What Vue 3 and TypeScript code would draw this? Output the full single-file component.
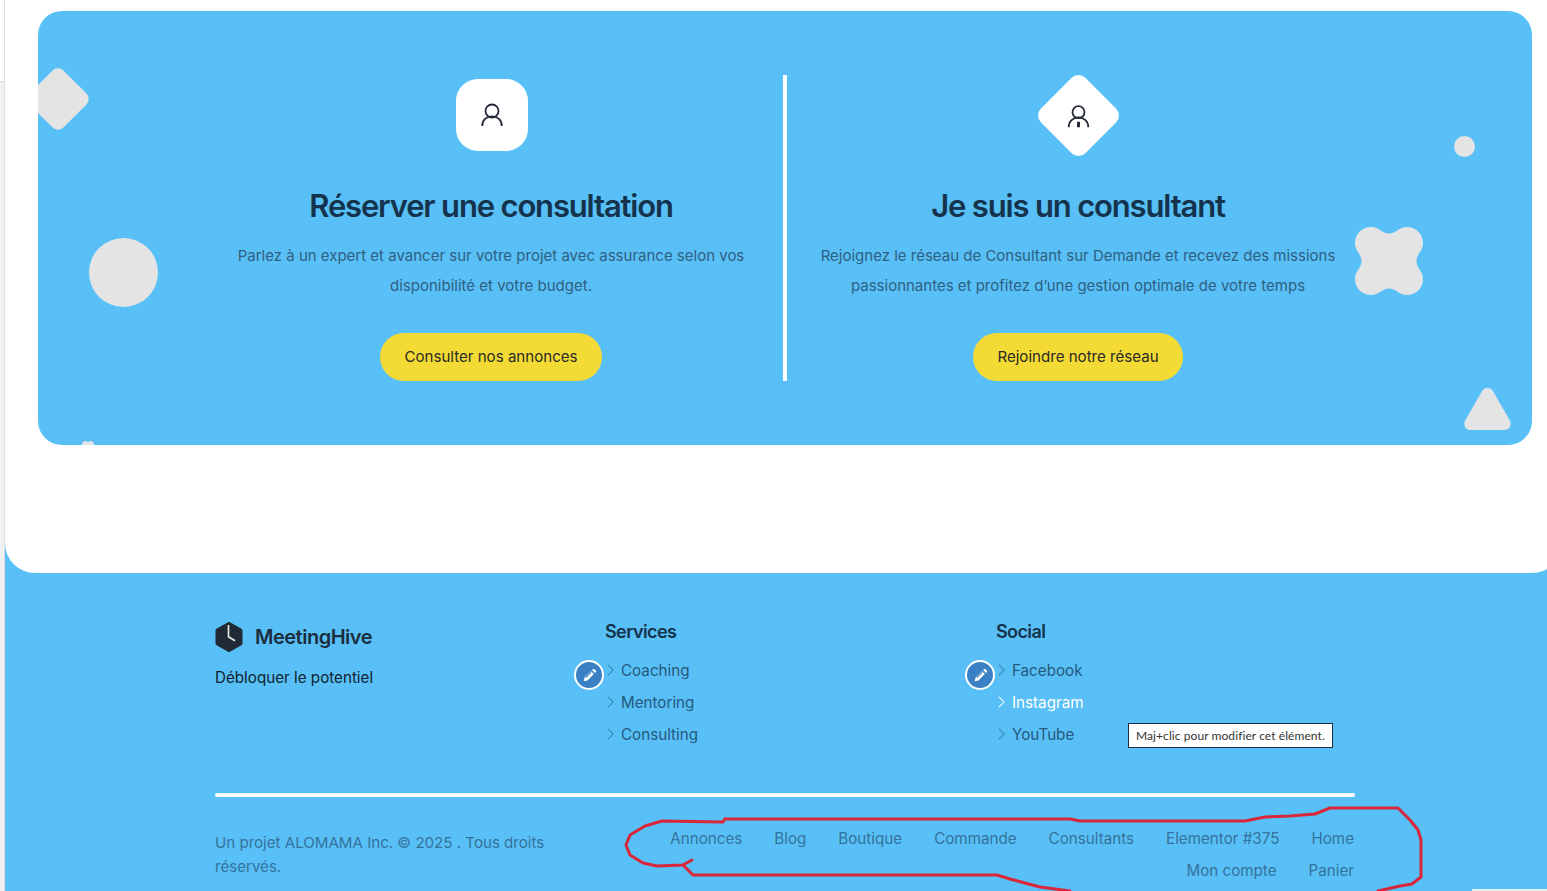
<script setup lang="ts">
interface Offer { title: string; lines: string[]; cta: string; diamond: boolean }
const offers: Offer[] = [
  { title: 'Réserver une consultation', lines: ['Parlez à un expert et avancer sur votre projet avec assurance selon vos', 'disponibilité et votre budget.'], cta: 'Consulter nos annonces', diamond: false },
  { title: 'Je suis un consultant', lines: ['Rejoignez le réseau de Consultant sur Demande et recevez des missions', 'passionnantes et profitez d’une gestion optimale de votre temps'], cta: 'Rejoindre notre réseau', diamond: true },
]
const services = ['Coaching', 'Mentoring', 'Consulting']
const social = ['Facebook', 'Instagram', 'YouTube']
const navTop = ['Annonces', 'Blog', 'Boutique', 'Commande', 'Consultants', 'Elementor #375', 'Home']
const navBottom = ['Mon compte', 'Panier']
</script>

<template>
  <div class="page">
    <aside class="rail"><div class="rail-top"></div></aside>
    <div class="content">
      <main class="panel">
        <section class="card">
          <div class="shape diamond"></div>
          <div class="shape circle-big"></div>
          <div class="shape circle-small"></div>
          <svg class="shape clover" viewBox="0 0 70 70"><path d="M17 1C25 1 28 7.5 35 7.5S45 1 53 1C62 1 69 8 69 17C69 25 62.5 28 62.5 35S69 45 69 53C69 62 62 69 53 69C45 69 42 62.5 35 62.5S25 69 17 69C8 69 1 62 1 53C1 45 7.5 42 7.5 35S1 25 1 17C1 8 8 1 17 1Z" /></svg>
          <svg class="shape triangle" viewBox="0 0 48 44"><path d="M24 2C27 2 29 4 30 6L46 34C48 39 45 43 41 43H7C3 43 0 39 2 34L18 6C19 4 21 2 24 2Z" /></svg>
          <svg class="shape clover-peek" viewBox="0 0 24 8"><path d="M0 8C0 3 3 0 7 0C9 0 10 2 12 2S15 0 17 0C21 0 24 3 24 8Z" /></svg>

          <article v-for="(o, i) in offers" :key="o.title" class="offer" :class="i === 0 ? 'first' : 'second'">
            <div class="badge" :class="{ 'badge-diamond': o.diamond }">
              <svg class="person" :class="{ upright: o.diamond }" viewBox="0 0 24 24" fill="none" stroke="#252b36" stroke-width="1.8">
                <circle cx="12" cy="8" :r="o.diamond ? 6 : 6.5" />
                <path d="M2.2 23C2.2 17 6.5 13.3 12 13.3S21.8 17 21.8 23" />
                <path v-if="o.diamond" d="M12 17.5v5.5" stroke-width="3" />
              </svg>
            </div>
            <h2>{{ o.title }}</h2>
            <p v-for="l in o.lines" :key="l">{{ l }}</p>
            <a class="cta">{{ o.cta }}</a>
          </article>
          <div class="divider"></div>
        </section>
      </main>

      <footer class="footer">
        <div class="cols">
          <div class="brand-col">
            <div class="brand">
              <svg class="logo" viewBox="0 0 28 30">
                <path d="M14 2 25.5 8.5V21.5L14 28 2.5 21.5V8.5Z" fill="#1f2a36" stroke="#1f2a36" stroke-width="4" stroke-linejoin="round" />
                <path d="M13.5 3v11.7l6.5 4" fill="none" stroke="#f1eee6" stroke-width="1.6" />
              </svg>
              <span>MeetingHive</span>
            </div>
            <div class="tagline">Débloquer le potentiel</div>
          </div>
          <div class="link-col">
            <h3>Services</h3>
            <span class="edit">
              <svg viewBox="0 0 16 16"><path d="M2.5 13.5l.9-3.6 6-6 2.7 2.7-6 6Z M10.4 2.9l.9-.9a1 1 0 0 1 1.4 0l1.3 1.3a1 1 0 0 1 0 1.4l-.9.9Z" fill="#fff" /><path d="M4.6 9.9l4.8-4.8" stroke="#3a80c4" stroke-width="1" /></svg>
            </span>
            <a v-for="s in services" :key="s" class="link">
              <svg class="chev" viewBox="0 0 8 14"><path d="M1 1l6 6-6 6" /></svg>{{ s }}
            </a>
          </div>
          <div class="link-col social">
            <h3>Social</h3>
            <span class="edit">
              <svg viewBox="0 0 16 16"><path d="M2.5 13.5l.9-3.6 6-6 2.7 2.7-6 6Z M10.4 2.9l.9-.9a1 1 0 0 1 1.4 0l1.3 1.3a1 1 0 0 1 0 1.4l-.9.9Z" fill="#fff" /><path d="M4.6 9.9l4.8-4.8" stroke="#3a80c4" stroke-width="1" /></svg>
            </span>
            <a v-for="s in social" :key="s" class="link" :class="{ active: s === 'Instagram' }">
              <svg class="chev" viewBox="0 0 8 14"><path d="M1 1l6 6-6 6" /></svg>{{ s }}
            </a>
            <div class="tooltip">Maj+clic pour modifier cet élément.</div>
          </div>
        </div>
        <div class="rule"></div>
        <div class="legal">
          <p class="copy">Un projet ALOMAMA Inc. © 2025 . Tous droits réservés.</p>
          <nav class="nav">
            <div class="nav-row"><a v-for="n in navTop" :key="n">{{ n }}</a></div>
            <div class="nav-row"><a v-for="n in navBottom" :key="n">{{ n }}</a></div>
          </nav>
        </div>
      </footer>
    </div>
    <svg class="scribble" viewBox="0 0 1547 891" fill="none" stroke="#d9263a" stroke-width="3" stroke-linejoin="round" stroke-linecap="round">
      <polyline points="725,819 723,822 662,821 645,826 630,835 626,845 630,855 643,863 657,866 683,865 692,860" />
      <polyline points="683,865 693,875 997,875 1010,879 1040,887 1070,891" />
      <polyline points="725,819 1070,819 1080,821 1245,821 1255,819 1265,817 1290,816 1315,814 1325,810 1330,808 1398,808 1410,820 1418,830 1421,840 1421,877 1412,884 1400,886 1378,891" />
    </svg>
    <div class="edge"></div>
  </div>
</template>

<style>
html, body { margin: 0; background: #58c0f6; overflow: hidden; }
</style>

<style scoped>
.page {
  position: relative;
  display: flex;
  width: 1547px;
  height: 891px;
  overflow: hidden;
  background: #58c0f6;
  font-family: "Inter", "Noto Sans", sans-serif;
}
.rail {
  flex: 0 0 4px;
  border-right: 1px solid #dedee1;
  background: #f0f0f3;
}
.rail-top { height: 81px; background: #fff; border-bottom: 1px solid #dcdcdf; }
.content { flex: 1; min-width: 0; }
.panel {
  height: 573px;
  box-sizing: border-box;
  margin-right: -15px;
  padding: 11px 30px 0 33px;
  background: #fff;
  border-radius: 0 0 30px 30px;
}
.card {
  position: relative;
  height: 434px;
  display: grid;
  grid-template-columns: 746px 748px;
  background: #58c0f6;
  border-radius: 24px;
  overflow: hidden;
}
.shape { position: absolute; fill: #e4e4e4; }
.diamond {
  left: -4px;
  top: 64px;
  width: 48px;
  height: 48px;
  background: #e4e4e4;
  border-radius: 8px;
  transform: rotate(45deg);
}
.circle-big { left: 51px; top: 227px; width: 69px; height: 69px; background: #e4e4e4; border-radius: 50%; }
.circle-small { left: 1416px; top: 125px; width: 21px; height: 21px; background: #e4e4e4; border-radius: 50%; }
.clover { left: 1316px; top: 215px; width: 70px; height: 70px; }
.triangle { left: 1425px; top: 375px; width: 49px; height: 45px; }
.clover-peek { left: 39px; top: 430px; width: 22px; height: 4px; }
.offer {
  display: flex;
  flex-direction: column;
  align-items: center;
  padding-top: 68px;
  text-align: center;
}
.offer.first { padding-left: 160px; }
.offer.first .badge { margin-left: 2px; }
.offer.second { padding-right: 160px; }
.badge {
  width: 72px;
  height: 72px;
  display: grid;
  place-items: center;
  background: #fff;
  border-radius: 22px;
}
.offer .badge-diamond {
  width: 63px;
  height: 63px;
  margin: 4.5px;
  border-radius: 10px;
  transform: rotate(45deg);
}
.person { width: 24px; height: 24px; }
.upright { transform: rotate(-45deg); }
h2 {
  margin: 34px 0 15px;
  font-size: 31px;
  line-height: 41px;
  font-weight: 600;
  letter-spacing: -1.17px;
  color: #15334c;
}
p { margin: 0; }
.offer p {
  font-size: 15px;
  line-height: 30px;
  color: #2f5f82;
  white-space: nowrap;
}
.cta {
  margin-top: 32px;
  height: 48px;
  box-sizing: border-box;
  padding: 0 24px 2px;
  display: flex;
  align-items: center;
  background: #f4da34;
  border-radius: 24px;
  font-size: 15.1px;
  color: #2a2a26;
}
.divider {
  position: absolute;
  left: 745px;
  top: 64px;
  width: 4px;
  height: 306px;
  background: #fff;
}
.footer { padding: 47px 192px 0 210px; }
.cols { display: grid; grid-template-columns: 390px 391px 1fr; height: 173px; }
.brand { display: flex; align-items: center; gap: 12px; height: 30px; margin-top: 2px; }
.logo { width: 28px; height: 30px; }
.brand span {
  font-size: 20px;
  font-weight: 600;
  letter-spacing: -0.5px;
  color: #1b2e3f;
}
.tagline { margin-top: 16px; font-size: 15.2px; color: #10222f; }
.link-col { position: relative; }
h3 {
  margin: 0 0 10px;
  height: 24px;
  font-size: 18px;
  line-height: 24px;
  font-weight: 600;
  letter-spacing: -0.6px;
  color: #15334c;
}
.link {
  display: flex;
  align-items: center;
  gap: 7px;
  height: 32px;
  font-size: 15.2px;
  color: #25597d;
}
.link.active { color: #fff; }
.chev { margin-left: 2px; width: 7px; height: 12px; fill: none; stroke: currentColor; stroke-width: 1.2; opacity: .6; }
.active .chev { opacity: 1; }
.edit {
  position: absolute;
  left: -31px;
  top: 40px;
  width: 30px;
  height: 30px;
  box-sizing: border-box;
  display: grid;
  place-items: center;
  background: #3a80c4;
  border: 2px solid #fff;
  border-radius: 50%;
}
.edit svg { width: 17px; height: 17px; }
.tooltip {
  position: absolute;
  left: 132px;
  top: 103px;
  height: 25px;
  box-sizing: border-box;
  padding: 0 7px;
  display: flex;
  align-items: center;
  background: #fff;
  border: 1px solid #1b2e3f;
  font-family: "Lato", sans-serif;
  font-size: 12px;
  letter-spacing: .08px;
  font-variant-ligatures: none;
  color: #333;
  white-space: nowrap;
}
.rule { height: 4px; background: #fff; border-radius: 2px; }
.legal { display: grid; grid-template-columns: 340px 1fr; margin-top: 25px; }
.copy { font-size: 15.1px; line-height: 24px; color: #35729c; margin-top: 9px; }
.nav { display: flex; flex-direction: column; padding-right: 1px; }
.nav-row { display: flex; justify-content: flex-end; gap: 32px; height: 32px; align-items: center; font-size: 15.2px; color: #35729c; }
.scribble { position: absolute; left: 0; top: 0; width: 1547px; height: 891px; pointer-events: none; }
.edge { position: absolute; left: 1472px; top: 889px; width: 75px; height: 2px; background: #ececec; }
</style>
